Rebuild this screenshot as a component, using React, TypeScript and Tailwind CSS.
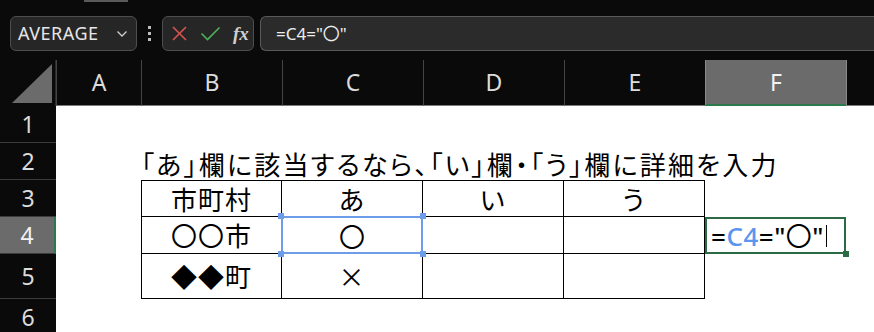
import React from 'react';

const JP = "font-['Noto_Sans_CJK_JP','Noto_Sans',sans-serif]";
const HEAD = "font-['Noto_Sans','Noto_Sans_CJK_JP',sans-serif]";

const cols = ['A', 'B', 'C', 'D', 'E', 'F'];

function Handle({ pos, color }: { pos: string; color: string }) {
  return <span className={`absolute w-[6px] h-[6px] ${color} ${pos}`} />;
}

function FormulaBar() {
  return (
    <div className="flex items-center h-[35px] mt-[14px] mb-[9px]">
      <div className="ml-[10px] w-[127px] h-[35px] flex items-center justify-between rounded-[6px] border border-[#4e4e4e] bg-[#262626] pl-[7px] pr-[8px]">
        <span className={`${HEAD} text-[18px] text-[#e6e6e6] tracking-[0.5px]`}>AVERAGE</span>
        <svg width="12" height="8" viewBox="0 0 12 8" fill="none" stroke="#cfcfcf" strokeWidth="1.3">
          <path d="M1.5 1.5 L6 6 L10.5 1.5" />
        </svg>
      </div>
      <div className="w-[25px] flex flex-col items-center gap-[3px]">
        <span className="w-[3px] h-[3px] bg-[#bdbdbd]" />
        <span className="w-[3px] h-[3px] bg-[#bdbdbd]" />
        <span className="w-[3px] h-[3px] bg-[#bdbdbd]" />
      </div>
      <div className="w-[92px] h-[35px] flex items-center rounded-[6px] border border-[#4e4e4e] bg-[#262626] pl-[8px] gap-[12px]">
        <svg width="17" height="17" viewBox="0 0 17 17" stroke="#d9534f" strokeWidth="1.6">
          <path d="M2 2 L15 15 M15 2 L2 15" />
        </svg>
        <svg width="21" height="15" viewBox="0 0 21 15" fill="none" stroke="#4caf5a" strokeWidth="1.6">
          <path d="M1.5 7.5 L7.5 13.5 L19.5 1.5" />
        </svg>
        <span className="font-['Liberation_Serif',serif] italic font-bold text-[19px] text-[#cfcfcf] leading-none">fx</span>
      </div>
      <div className="ml-[6px] flex-1 h-[35px] flex items-center rounded-l-[6px] border border-r-0 border-[#5a5a5a] bg-[#2b2b2b] pl-[15px]">
        <span className={`${HEAD} text-[17px] text-[#ededed]`}>=C4="〇"</span>
      </div>
    </div>
  );
}

export default function App() {
  const rowHeights = [37, 37, 37, 37, 45, 37];

  const cellFor = (r: number, c: number) => {
    // r: 1..6, c: 0..5 (A..F)
    const inTable = r >= 3 && r <= 5 && c >= 1 && c <= 4;
    let cls = 'relative flex items-center justify-center bg-white';
    if (inTable) {
      cls += ' border-r border-black border-b';
      if (r === 3) cls += ' border-t';
      if (c === 1) cls += ' border-l';
    }
    let content: React.ReactNode = null;
    if (r === 2 && c === 1) {
      return (
        <div key={`${r}-${c}`} className="relative z-10 bg-white overflow-visible flex items-end">
          <span className={`${JP} [font-feature-settings:'palt'] text-[26px] leading-none whitespace-nowrap text-black tracking-[2.2px] mb-[3px]`}>
            「あ」欄に該当するなら、「い」欄・「う」欄に詳細を入力
          </span>
        </div>
      );
    }
    if (r === 3) {
      content = ['', '市町村', 'あ', 'い', 'う', ''][c];
    }
    if (r === 4) {
      content = ['', '〇〇市', '〇', '', '', ''][c];
    }
    if (r === 5) {
      content = ['', '◆◆町', '×', '', '', ''][c];
    }
    if (r === 4 && c === 2) {
      return (
        <div key={`${r}-${c}`} className={`${cls} z-10 bg-[#e9f0fc]`}>
          <div className="absolute inset-[-1px] border-2 border-[#6d9de8]" />
          <Handle pos="-left-[4px] -top-[4px]" color="bg-[#6d9de8]" />
          <Handle pos="-right-[4px] -top-[4px]" color="bg-[#6d9de8]" />
          <Handle pos="-left-[4px] -bottom-[4px]" color="bg-[#6d9de8]" />
          <Handle pos="-right-[4px] -bottom-[4px]" color="bg-[#6d9de8]" />
          <span className={`${JP} text-[26px] text-black relative`}>〇</span>
        </div>
      );
    }
    if (r === 4 && c === 5) {
      return (
        <div key={`${r}-${c}`} className="relative z-10 bg-white flex items-center">
          <div className="absolute inset-0 border-2 border-[#2a6a44]" />
          <Handle pos="-right-[3px] -bottom-[3px]" color="bg-[#2a6a44]" />
          <span className={`${HEAD} font-medium text-[26px] text-black pl-[6px] whitespace-nowrap relative leading-none tracking-[0.5px]`}>
            =<span className="text-[#5b95ee]">C4</span>="<span className={`${JP} font-normal`}>〇</span>"
          </span>
          <span className="w-[1px] h-[22px] bg-black ml-[2px] relative" />
        </div>
      );
    }
    return (
      <div key={`${r}-${c}`} className={cls}>
        {content && <span className={`${JP} text-[26px] text-black leading-none tracking-[1px]`}>{content}</span>}
      </div>
    );
  };

  return (
    <div className="w-[874px] h-[332px] overflow-hidden bg-[#0a0a0a]">
      <div className="h-[2px] ml-[84px] w-[44px] bg-[#5a5a5a]" />
      <FormulaBar />
      <div className="grid grid-cols-[56px_85px_141px_141px_141px_141px_141px_1fr] grid-rows-[46px_37px_37px_37px_37px_45px_37px]">
        {/* corner */}
        <div className="relative border-r border-[#2a2a2a] flex items-end justify-end pr-[3px] pb-[3px]">
          <svg width="40" height="39" viewBox="0 0 40 39">
            <path d="M40 0 L40 39 L0 39 Z" fill="#6b6b6b" />
          </svg>
        </div>
        {cols.map((c, i) => (
          <div
            key={c}
            className={`flex items-center justify-center border-b border-l ${
              c === 'F'
                ? 'bg-[#6b6b6b] border-b-2 border-b-[#2a7a4c] border-l-[#8a8a8a]'
                : 'border-b-[#7a7a7a] border-l-[#444]'
            } ${i === 0 ? 'border-l-[#2a2a2a]' : ''}`}
          >
            <span className={`${HEAD} text-[23px] ${c === 'F' ? 'text-[#f2f2f2]' : 'text-[#dcdcdc]'}`}>{c}</span>
          </div>
        ))}
        <div className="border-b border-[#7a7a7a] border-l border-l-[#8a8a8a]" />
        {rowHeights.map((_, ri) => {
          const r = ri + 1;
          return (
            <React.Fragment key={r}>
              <div
                className={`flex items-center justify-center border-b border-[#3c3c3c] ${
                  r === 4 ? 'bg-[#6b6b6b] border-r-2 border-r-[#2a7a4c]' : ''
                }`}
              >
                <span className={`${HEAD} text-[23px] ${r === 4 ? 'text-[#f2f2f2]' : 'text-[#dcdcdc]'}`}>{r}</span>
              </div>
              {cols.map((_, ci) => cellFor(r, ci))}
              <div className="bg-white" />
            </React.Fragment>
          );
        })}
      </div>
    </div>
  );
}
